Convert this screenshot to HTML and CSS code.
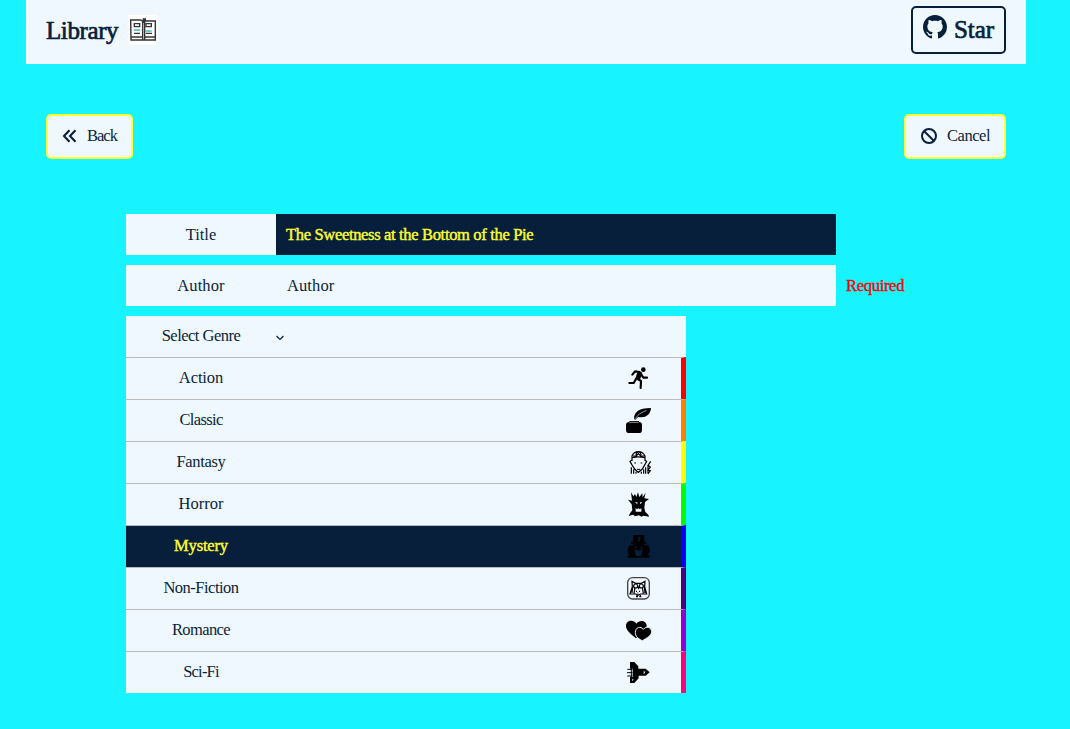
FILE: index.html
```html
<!DOCTYPE html>
<html lang="en">
<head>
<meta charset="utf-8">
<title>Library</title>
<link rel="stylesheet" href="styles.css">
</head>
<body>
<header class="header">
  <div class="brand">
    <h1 class="brand-name">Library</h1>
    <svg class="brand-icon" viewBox="0 0 90 90"><path fill="#fff" d="M0 0h90v90H0z"/><g fill="none" stroke="#333" stroke-width="4.2"><path d="M8 15h30l8 5V12h6v6h30v48H50v9H9zM44 20v54M50 14v50M8 66h36M50 75h32V64"/><path d="M19 26h16v9H19zM54 26h16v9H54zM18 55h18M54 55h18" stroke-width="4"/></g><path stroke="#4bb8b8" stroke-width="4" d="M18 45h18M52 48h19"/></svg>
  </div>
  <button class="star" type="button">
    <svg class="star-icon" viewBox="0 0 16 16"><path d="M8 0C3.58 0 0 3.58 0 8c0 3.54 2.29 6.53 5.47 7.59.4.07.55-.17.55-.38 0-.19-.01-.82-.01-1.49-2.01.37-2.53-.49-2.69-.94-.09-.23-.48-.94-.82-1.13-.28-.15-.68-.52-.01-.53.63-.01 1.08.58 1.23.82.72 1.21 1.87.87 2.33.66.07-.52.28-.87.51-1.07-1.78-.2-3.64-.89-3.64-3.95 0-.87.31-1.59.82-2.15-.08-.2-.36-1.02.08-2.12 0 0 .67-.21 2.2.82.64-.18 1.32-.27 2-.27s1.36.09 2 .27c1.53-1.04 2.2-.82 2.2-.82.44 1.1.16 1.92.08 2.12.51.56.82 1.27.82 2.15 0 3.07-1.87 3.75-3.65 3.95.29.25.54.73.54 1.48 0 1.07-.01 1.93-.01 2.2 0 .21.15.46.55.38A8.01 8.01 0 0 0 16 8c0-4.42-3.58-8-8-8z"/></svg>
    <span class="star-label">Star</span>
  </button>
</header>
<main class="page">
  <nav class="actions">
    <button class="action" type="button"><svg class="action-icon back-icon" viewBox="0 0 16 16"><path d="M7.5 2.2 2 8l5.500 5.800M13.500 2.200 8 8l5.500 5.800"/></svg><span class="w-back">Back</span></button>
    <button class="action action-cancel" type="button"><svg class="action-icon" viewBox="0 0 16 16"><circle cx="8" cy="8" r="7"/><path d="m3 3 10 10"/></svg><span class="w-cancel">Cancel</span></button>
  </nav>
  <form class="form">
    <div class="field"><label class="label w-title">Title</label><div class="value filled">The Sweetness at the Bottom of the Pie</div></div>
    <div class="field"><label class="label w-author">Author</label><div class="value w-author">Author</div><span class="required">Required</span></div>
    <div class="genres">
      <div class="select"><span class="label w-select">Select Genre</span><svg class="chevron" viewBox="0 0 8 6"><path d="m.5 1 3.500 3.500L7.500 1"/></svg></div>
      <div class="genre red"><span class="label w-action">Action</span>
        <svg class="genre-icon" viewBox="39 39 90 93"><circle cx="100" cy="59" r="7"/><path class="runner" d="M67 74l8-10 14 2 7 11 4 6h11M89 68 80 85l13 8-1 21M78 87l-7 12H58"/><path d="m83 64 14 4-8 24-13-6z"/></svg></div>
      <div class="genre orange"><span class="label w-classic">Classic</span>
        <svg class="genre-icon" viewBox="39 165 90 93"><path d="M58 213h29v3q9 0 9 9v14q0 10-9 10H57q-9 0-9-10v-14q0-9 10-9zM72 207c0-19 12-33 51-33-1 20-16 31-39 27l-8 8z"/><path class="quill" d="m74 207 15-16 20-10M58 217h28"/></svg></div>
      <div class="genre yellow"><span class="label w-fantasy">Fantasy</span>
        <svg class="genre-icon" viewBox="39 21 90 93"><g class="thin"><path d="M66 63V48q5-13 19-13t20 13v15M69 48h10l6-7 7 7h11M78 46c0-7 3-10 7-10s8 3 8 10M67 53q18-5 37 0M66 60l-6 4 5 9 9 14 11 10 12-10 8-14 5-9-6-4M64 82v19M71 88v13M78 95v6M94 95v6M101 88v13M107 82v19"/><path d="M73 69h5M92 69h5M81 88h9" stroke-width="3"/><path d="m122 64-8 12 7 5-7 9 7 2-7 10M114 76v24"/></g></svg></div>
      <div class="genre green"><span class="label w-horror">Horror</span>
        <svg class="genre-icon" viewBox="39 147 90 93"><path fill-rule="evenodd" d="m63 157 7 12 5-7 4 9 5-14 4 14 9-11 1 12 9-14-4 17 14 2-12 9-2 18 3 12 9 8 2 6-17-3-5 3-9-4-10 3-7-5-13 4 4-8 7-9-2-18-11-14 12 3zM75 187l7 6v-6zM90 193l7-6h-7zM77 204v11h17v-11l-4 4-5-3-4 3z"/></svg></div>
      <div class="genre blue selected"><span class="label w-mystery">Mystery</span>
        <svg class="genre-icon" viewBox="39 18 90 93"><path fill-rule="evenodd" d="M69 30h34v20h6v7h-6v4h11l5 9v12l-7 9h7v7H53v-7h6l-6-9V70l6-9h10v-4h-6v-7h6zM82 37v3h5v4h-3v4h5v-5h2v-7zM75 66h6v4h-6zM91 66h6v4h-6zM72 73l4 13 4 7h13l6-20-13 4z"/></svg></div>
      <div class="genre indigo"><span class="label w-non">Non-Fiction</span>
        <svg class="genre-icon" viewBox="39 144 90 93"><rect class="frame" x="53" y="158" width="65" height="64" rx="15"/><g class="thin"><path d="M66 169l10 6h18l11-6-1 16 6 22H92l-7 3-8-3H60l7-22zM68 184l-2 20M103 184l2 20M75 188l-3 17M97 188l3 17M78 199h3M87 199h3M82 204h3M78 215h6M88 215h6M81 210v5M91 210v5M83 184l3 6 3-6"/><circle cx="77" cy="183" r="6"/><circle cx="94" cy="183" r="6"/></g></svg></div>
      <div class="genre violet"><span class="label w-romance">Romance</span>
        <svg class="genre-icon" viewBox="39 21 90 93"><path d="M78 91C63 78 48 68 48 54c0-17 22-21 31-7 9-13 31-10 31 7 0 15-20 25-32 37z"/><path class="heart" d="M97 98C82 91 76 85 76 73c0-15 16-20 24-9 9-12 25-5 25 7 0 11-14 19-28 27z"/></svg></div>
      <div class="genre pink"><span class="label w-sci">Sci-Fi</span>
        <svg class="genre-icon" viewBox="39 147 90 93"><path fill-rule="evenodd" d="M60 162h13l12 13v7h22l12 11-12 10H86v8l-13 14H60v-18h8v-25h-8zM101 188v10q8-5 0-10zM66 214v6l5-6z"/><path class="flame" d="M52 184h15M51 194h16M52 204h15M64 181v26"/></svg></div>
    </div>
  </form>
</main>
</body>
</html>
```
FILE: styles.css
```css
* { box-sizing: border-box; }
body { margin: 0; height: 729px; overflow: hidden; background: #17f3ff; color: #081f3b; font: 16.5px/20px "Liberation Serif", serif; }
button { font: inherit; color: inherit; background: #f0f8ff; padding: 0; }
svg { display: block; flex: none; }
.header { width: 1000px; height: 64px; margin-left: 26px; padding: 6px 20px 10px; display: flex; justify-content: space-between; background: #f0f8ff; }
.brand { display: flex; align-items: center; }
.brand-name { margin: 0; padding-top: 2px; width: 82px; font-size: 25px; line-height: 30px; font-weight: 400; letter-spacing: -.4px; -webkit-text-stroke: .7px; }
.brand-icon { width: 30px; height: 30px; }
.star { width: 95px; height: 48px; display: flex; align-items: center; gap: 7px; padding-left: 10px; border: 2px solid #081f3b; border-radius: 5px; }
.star-icon { width: 24px; height: 24px; fill: #081f3b; margin-top: -6px; }
.star-label { font-size: 25px; line-height: 30px; letter-spacing: -.1px; -webkit-text-stroke: .7px; }
.page { padding: 50px 64px 0 46px; }
.actions { display: flex; justify-content: space-between; }
.action { height: 45px; width: 87px; display: flex; align-items: center; gap: 9px; padding: 0 0 2px 14px; border: 2px solid #ffff32; border-radius: 5px; }
.action-cancel { width: 102px; gap: 10px; padding-left: 15px; }
.action-icon { width: 16px; height: 16px; fill: none; stroke: #081f3b; stroke-width: 2; }
.back-icon { stroke-width: 2.1; }
.form { padding: 55px 0 0 80px; display: grid; gap: 10px; }
.field { height: 41px; display: flex; align-items: center; }
.label { width: 150px; text-align: center; flex: none; }
.field .label { background: #f0f8ff; height: 41px; line-height: 41px; }
.value { width: 560px; height: 41px; padding-left: 11px; background: #f0f8ff; line-height: 41px; }
.filled { padding-left: 10px; background: #081f3b; color: #ffff32; letter-spacing: -.33px; -webkit-text-stroke: .4px; white-space: nowrap; }
.required { margin-left: 10px; color: #f00; letter-spacing: -.3px; -webkit-text-stroke: .4px; }
.genres { width: 560px; background: #f0f8ff; }
.select { height: 41px; display: flex; align-items: center; }
.select .label, .genre .label { padding-bottom: 1px; }
.chevron { width: 8px; height: 6px; fill: none; stroke: #081f3b; stroke-width: 1.2; margin-top: 3px; }
.genre { height: 42px; display: flex; align-items: center; justify-content: space-between; padding-right: 28px; border-top: 1px solid #bbb; border-right: 5px solid; }
.genre-icon { width: 30px; height: 31px; fill: #000; }
.runner { fill: none; stroke: #000; stroke-width: 6.5; stroke-linecap: round; stroke-linejoin: round; }
.quill { fill: none; stroke: #f0f8ff; stroke-width: 1.8; }
.thin { fill: none; stroke: #000; stroke-width: 3.6; }
.frame { fill: none; stroke: #444; stroke-width: 4; }
.heart { stroke: #f0f8ff; stroke-width: 3; }
.flame { stroke: #000; stroke-width: 3; }
.selected { background: #081f3b; }
.selected .label { color: #ffff32; -webkit-text-stroke: .4px; }
.red { border-right-color: #f00; }
.orange { border-right-color: #ff7f00; }
.yellow { border-right-color: #ff0; }
.green { border-right-color: #0f0; }
.blue { border-right-color: #00f; }
.indigo { border-right-color: #4b0082; }
.violet { border-right-color: #9400d3; }
.pink { border-right-color: #ff007f; }
.w-back { letter-spacing: -1px; }
.w-cancel { letter-spacing: -.45px; }
.w-author { letter-spacing: .1px; }
.w-select { letter-spacing: -.5px; }
.w-action { letter-spacing: -.1px; }
.w-classic { letter-spacing: -.65px; }
.w-fantasy { letter-spacing: -.35px; }
.w-mystery { letter-spacing: -.15px; }
.w-non { letter-spacing: -.5px; }
.w-romance { letter-spacing: -.6px; }
.w-sci { letter-spacing: -.8px; }
```
